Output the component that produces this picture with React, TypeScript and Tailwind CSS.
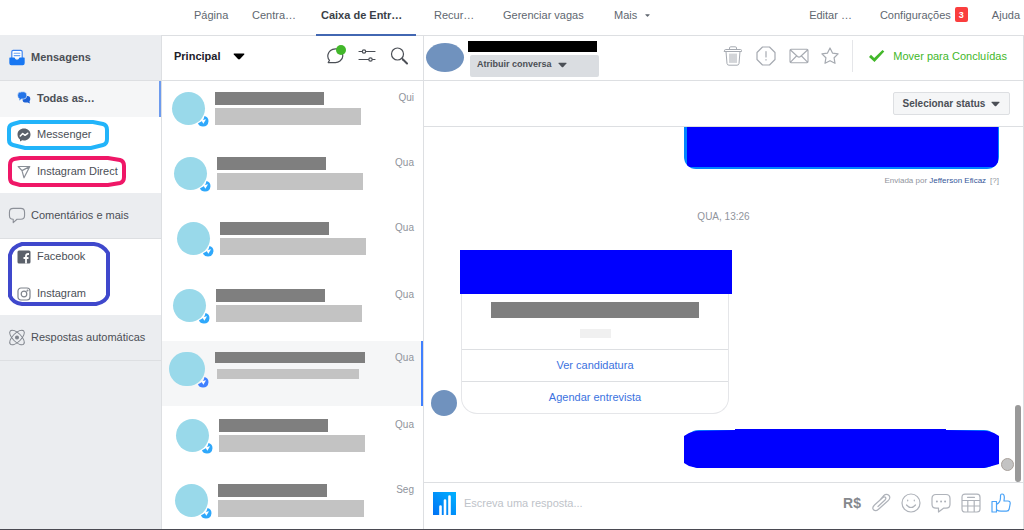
import type { ReactNode } from "react";

const conversations = [
  { day: "Qui", pad: "pl-[10px] pt-[11px]" },
  { day: "Qua", pad: "pl-[12px] pt-[11px]" },
  { day: "Qua", pad: "pl-[15px] pt-[11px]" },
  { day: "Qua", pad: "pl-[11px] pt-[13px]" },
  { day: "Qua", pad: "pl-[7px] pt-[11px]", selected: true },
  { day: "Qua", pad: "pl-[14px] pt-[13px]" },
  { day: "Seg", pad: "pl-[13px] pt-[13px]" },
];

function Icon({
  className,
  box = 20,
  children,
}: {
  className: string;
  box?: number;
  children: ReactNode;
}) {
  return (
    <svg
      viewBox={`0 0 ${box} ${box}`}
      className={`shrink-0 ${className}`}
      fill="none"
      stroke="currentColor"
      strokeWidth="1.2"
      strokeLinecap="round"
      strokeLinejoin="round"
      aria-hidden="true"
    >
      {children}
    </svg>
  );
}

function Caret({ className }: { className: string }) {
  return (
    <svg viewBox="0 0 12 7" className={`shrink-0 ${className}`} fill="currentColor" aria-hidden="true">
      <path d="M1.2.5h9.6q1 0 .4.9L7 6.1q-1 .9-2 0L.8 1.4Q.2.5 1.2.5Z" />
    </svg>
  );
}

function TopNav() {
  return (
    <header className="flex h-9 shrink-0 items-stretch justify-between border-b border-[#dddfe2] text-[11px] text-[#606770]">
      <nav className="flex pl-[194px]">
        <a href="#" className="w-[58px] pt-[7px] leading-4">Página</a>
        <a href="#" className="w-16 pt-[7px] leading-4">Centra…</a>
        <a
          href="#"
          className="-mb-px w-[100px] border-b-2 border-[#4267b2] pt-[7px] pl-[5px] font-bold leading-4 text-[#3a3f47]"
        >
          Caixa de Entr…
        </a>
        <a href="#" className="w-[87px] pt-[7px] pl-[18px] leading-4">Recur…</a>
        <a href="#" className="w-[111px] pt-[7px] leading-4">Gerenciar vagas</a>
        <button className="flex items-start gap-2 pt-[7px] leading-4">
          Mais
          <Caret className="mt-[7px] h-[3px] w-[5px]" />
        </button>
      </nav>
      <nav className="flex items-start gap-6 pt-[7px] pr-1 leading-4">
        <a href="#" className="mr-1">Editar …</a>
        <a href="#" className="flex gap-1">
          Configurações
          <span className="flex h-[15px] w-[13px] items-center justify-center rounded-[2px] bg-[#fa3e3e] text-[9px] font-bold text-white">
            3
          </span>
        </a>
        <a href="#">Ajuda</a>
      </nav>
    </header>
  );
}

function SideSection({ icon, label, bold }: { icon: ReactNode; label: string; bold?: boolean }) {
  return (
    <a
      href="#"
      className={`flex h-[46px] items-center gap-[5px] border-b border-[#dddfe2] bg-[#ebedf0] pl-2 text-[11px] text-[#4b4f56] ${bold ? "font-bold" : ""}`}
    >
      {icon}
      {label}
    </a>
  );
}

function SideItem({ icon, label }: { icon: ReactNode; label: string }) {
  return (
    <a href="#" className="flex h-[37px] items-center gap-1.5 pb-0.5 pl-[17px] text-[11px] text-[#4b4f56]">
      {icon}
      {label}
    </a>
  );
}

function Sidebar() {
  return (
    <aside className="w-[162px] shrink-0 border-r border-[#dddfe2] bg-[#ebedf0]">
      <div className="-mt-px">
        <SideSection
          bold
          label="Mensagens"
          icon={
            <Icon className="h-[17px] w-[18px]" box={18}>
              <path d="M3.500 10V3q0-1.500 1.500-1.500h8Q14.500 1.500 14.500 3v7" fill="#fff" stroke="#3b82f0" />
              <path d="M6 4.500h6M6 7h6" stroke="#6ba4f5" />
              <path d="M1.500 9.500H6q.5 2.500 3 2.500t3-2.500h4.500V15q0 1.500-1.500 1.500H3Q1.500 16.500 1.500 15Z" fill="#1877f2" stroke="#1877f2" />
            </Icon>
          }
        />
      </div>
      <a
        href="#"
        className="flex h-9 items-center gap-1.5 border-r-2 border-[#6d9bee] bg-[#f5f6f7] pb-0.5 pl-[17px] text-[11px] font-bold text-[#4b4f56]"
      >
        <Icon className="h-3.5 w-3.5" box={14}>
          <path d="M7 5h3.500Q13.300 5 13.300 8q0 1.500-.8 2.200l.4 2.300-2.200-1H8Q5.500 11.500 5.500 8Z" fill="#1d62d6" stroke="none" />
          <path d="M3.500.8h3.300Q9.800.8 9.800 4.400T6.800 8H4.600L2 10l.2-2.400Q.6 6.800.6 4.400.6.800 3.500.8Z" fill="#2374e8" stroke="#f5f6f7" strokeWidth=".6" />
        </Icon>
        Todas as…
      </a>
      <div className="relative bg-white pb-0.5">
        <SideItem
          label="Messenger"
          icon={
            <Icon className="h-3.5 w-3.5" box={14}>
              <path d="M7 .5c3.700 0 6.500 2.500 6.500 6s-2.800 6-6.500 6l-1.800-.2L3 13.500v-2C1.400 10.400.5 8.600.5 6.500c0-3.500 2.800-6 6.500-6Z" fill="#5b616b" stroke="none" />
              <path d="m3.300 8 2.400-2.500L8 7.300l2.700-2" stroke="#fff" strokeWidth="1.500" />
            </Icon>
          }
        />
        <SideItem
          label="Instagram Direct"
          icon={
            <Icon className="h-3.5 w-3.5 text-[#8a8f97]" box={14}>
              <path d="M1.200 1.500h11.600L7 12.800 5 5.600ZM5 5.600l7.600-4" />
            </Icon>
          }
        />
        <svg viewBox="0 0 130 76" className="absolute top-0 left-0 h-19 w-[130px]" fill="none" strokeWidth="4" aria-hidden="true">
          <path d="M20 5h73l10 2q4 1 4 6v9q0 5-4 6l-12 3H25l-12-3q-4-1-4-5V12q0-4 4-5Z" stroke="#22b4fa" />
          <path d="M20 41h88l12 2q4 1 4 6v11q0 5-4 6l-12 2H20l-7-2q-3-1-3-5V48q0-5 4-6Z" stroke="#ef1767" />
        </svg>
      </div>
      <SideSection
        label="Comentários e mais"
        icon={
          <Icon className="h-[17px] w-[18px] text-[#8d9199]" box={18}>
            <path d="M5 1.500h8q4 0 4 4V9q0 4-4 4H9l-4 3.500V13Q1 13 1 9V5.500q0-4 4-4Z" />
          </Icon>
        }
      />
      <div className="relative bg-white pb-0.5">
        <SideItem
          label="Facebook"
          icon={
            <Icon className="h-3.5 w-3.5" box={14}>
              <rect x=".5" y=".5" width="13" height="13" rx="1.500" fill="#5b616b" stroke="none" />
              <path d="M9 13.500V6q0-2 2.200-2h.8M6.500 8h5" stroke="#fff" strokeWidth="1.800" strokeLinecap="butt" />
            </Icon>
          }
        />
        <SideItem
          label="Instagram"
          icon={
            <Icon className="h-3.5 w-3.5 text-[#7f848c]" box={14}>
              <rect x="1" y="1" width="12" height="12" rx="3" />
              <circle cx="7" cy="7" r="2.800" />
              <circle cx="10.500" cy="3.500" r=".4" />
            </Icon>
          }
        />
        <svg viewBox="0 0 114 70" className="absolute top-0 left-0 h-[70px] w-[114px]" fill="none" strokeWidth="4" aria-hidden="true">
          <path d="M22 5h72q9 1 14 9v42q-2 7-12 9H22q-9-1-12-8V16q2-8 12-11Z" stroke="#3f48cc" strokeLinejoin="round" />
        </svg>
      </div>
      <SideSection
        label="Respostas automáticas"
        icon={
          <Icon className="h-[17px] w-[18px] text-[#7f848c]" box={18}>
            <ellipse cx="9" cy="9" rx="10" ry="4.500" transform="rotate(45 9 9)" strokeWidth="1" />
            <ellipse cx="9" cy="9" rx="10" ry="4.500" transform="rotate(-45 9 9)" strokeWidth="1" />
            <circle cx="9" cy="9" r="1.500" fill="currentColor" />
          </Icon>
        }
      />
    </aside>
  );
}

function Conversation({ day, pad, selected }: { day: string; pad: string; selected?: boolean }) {
  return (
    <li className={`flex h-[65px] shrink-0 items-start ${pad} ${selected ? "border-r-2 border-[#4080ff] bg-[#f5f6f7] pr-[7px]" : "pr-[9px]"}`}>
      <div className={`relative shrink-0 rounded-full bg-[#99d9ea] ${selected ? "h-[34px] w-9" : "h-[33px] w-[33px]"}`}>
        <svg viewBox="0 0 12 12" className="absolute -right-1 -bottom-0.5 h-3 w-3" aria-hidden="true">
          <path
            d="M7.500 1Q11.500 2 11.500 6.300 11 11.500 6 11.500 2 11.500 1 8.200 6.500 6.500 7.500 1Z"
            fill={selected ? "#4080ff" : "#2fa8fb"}
          />
          <path d="M4.300 5.200 9 4.300 6.400 8.800Z" fill="#fff" />
        </svg>
      </div>
      {selected ? (
        <div className="ml-2.5 space-y-1.5">
          <div className="h-[11px] w-[150px] bg-[#7f7f7f]" />
          <div className="ml-0.5 h-2.5 w-[142px] bg-[#c3c3c3]" />
        </div>
      ) : (
        <div className="ml-2.5 space-y-[3px]">
          <div className="h-[13px] w-[109px] bg-[#7f7f7f]" />
          <div className="h-[17px] w-[146px] bg-[#c3c3c3]" />
        </div>
      )}
      <time className="ml-auto text-[10px] leading-3 text-[#90949c]">{day}</time>
    </li>
  );
}

function ConversationList() {
  return (
    <section className="flex w-[262px] shrink-0 flex-col overflow-hidden border-r border-[#dddfe2]">
      <div className="flex h-[45px] shrink-0 items-center border-b border-[#dddfe2] pr-[15px] pb-1 pl-3">
        <button className="flex items-center gap-[13px] text-[11px] font-bold text-[#1d2129]">
          Principal
          <Caret className="h-[7px] w-3 text-black" />
        </button>
        <div className="ml-auto flex items-center gap-3.5 text-[#4b4f56]">
          <button aria-label="Não lidas" className="relative">
            <Icon className="h-[18px] w-[18px]" box={18}>
              <path d="M9.500 1.800A6.800 6.800 0 0 1 14 14q-2 1.600-4.500 1.600H2.200l1.300-2.300Q1.200 11 2 7.500 3.300 2.200 9.500 1.800Z" />
            </Icon>
            <span className="absolute -top-0.5 -right-0.5 h-2.5 w-2.5 rounded-full bg-[#42b72a]" />
          </button>
          <button aria-label="Filtros">
            <Icon className="h-[18px] w-[18px]" box={18}>
              <path d="M1 4.500h3M8 4.500h9M1 12.500h9.500M14.500 12.500H17" />
              <circle cx="6" cy="4.500" r="1.700" />
              <circle cx="12.500" cy="12.500" r="1.700" />
            </Icon>
          </button>
          <button aria-label="Pesquisar">
            <Icon className="h-[18px] w-[18px]" box={18}>
              <circle cx="7.500" cy="7" r="6" />
              <path d="m12 11.500 1 1" />
              <path d="m13 12.500 4 4" strokeWidth="2" />
            </Icon>
          </button>
        </div>
      </div>
      <ul className="flex min-h-0 flex-1 flex-col overflow-hidden">
        {conversations.map((c, i) => (
          <Conversation key={i} {...c} />
        ))}
      </ul>
    </section>
  );
}

function ChatHeader() {
  return (
    <div className="flex h-[45px] shrink-0 items-start border-b border-[#dddfe2] pr-4 pl-0.5">
      <div className="mt-[7px] h-[29px] w-[38px] shrink-0 rounded-[50%] bg-[#7092be]" />
      <div className="mt-[5px] ml-1">
        <div className="h-[11px] w-[129px] bg-black" />
        <button className="mt-[3px] ml-0.5 flex h-[22px] w-[129px] items-start gap-1.5 rounded-[2px] bg-[#dadde1] pt-[3px] pl-[7px] text-[9px] leading-3 font-bold text-[#4b4f56]">
          Atribuir conversa
          <Caret className="mt-[4px] h-[6px] w-[9px]" />
        </button>
      </div>
      <div className="mt-2.5 ml-auto flex items-center gap-[13px] text-[#a6aab1]">
        <button aria-label="Excluir">
          <Icon className="h-5 w-5">
            <path d="M1.500 4.500q0-1 1-1h15q1 0 1 1v1h-17ZM6.500 3.500V2q0-1.200 1.200-1.200h4.600q1.200 0 1.200 1.200v1.500M3 5.500l1 12q.2 1.700 2 1.700h8q1.800 0 2-1.700l1-12M7 8v8.500M9 8v8.500M11 8v8.500M13 8v8.500" strokeWidth="1" />
          </Icon>
        </button>
        <button aria-label="Spam">
          <Icon className="h-5 w-5">
            <path d="M6.500 1h7L19 6.500v7L13.500 19h-7L1 13.500v-7ZM10 5.500v5.500M10 13.500v.6" />
          </Icon>
        </button>
        <button aria-label="Marcar como não lida">
          <Icon className="h-5 w-5">
            <path d="M1 4.500q0-1.200 1-1.200h16q1 0 1 1.200v11q0 1.200-1 1.200H2q-1 0-1-1.200ZM1.500 4l7 6.500q1.500 1.200 3 0l7-6.500M1.500 16.200l6-6.200M18.500 16.200l-6-6.200" strokeWidth="1.100" />
          </Icon>
        </button>
        <button aria-label="Acompanhar" className="-mx-0.5">
          <Icon className="h-5 w-5">
            <path d="m10 2 2.500 5.100 5.600.8-4 3.900.9 5.500-5-2.600-5 2.600.9-5.500-4-3.900 5.600-.8Z" />
          </Icon>
        </button>
      </div>
      <button className="mt-1 ml-3.5 flex h-8 items-center gap-2 border-l border-[#e5e6e9] pl-[15px] text-[11px] text-[#42b72a]">
        <svg viewBox="0 0 17 14" className="h-3.5 w-[17px]" aria-hidden="true">
          <path d="m1 8 2-2.200L6.200 9 14.500 1l1.800 1.500L6.500 13Z" fill="#42b72a" />
        </svg>
        Mover para Concluídas
      </button>
    </div>
  );
}

function Messages() {
  return (
    <div className="relative min-h-0 flex-1 overflow-hidden">
      <div className="pr-6 pl-[7px]">
        <div className="ml-auto h-[42px] w-[315px] overflow-hidden rounded-b-xl bg-[#0084ff] pr-px pb-0.5 pl-[3px]">
          <div className="h-full bg-[#0000ff]" />
        </div>
        <p className="mt-1.5 text-right text-[8px] leading-3 text-[#90949c]">
          Enviada por <a href="#" className="text-[#365899]">Jefferson Eficaz</a>
          <button className="ml-1">[?]</button>
        </p>
      </div>
      <p className="mt-6 text-center text-[10px] leading-3 text-[#90949c]">QUA, 13:26</p>
      <div className="mt-[27px] flex items-end pl-[7px]">
        <div className="-mb-0.5 h-[26px] w-[26px] rounded-full bg-[#7092be]" />
        <div className="ml-[3px] w-[272px]">
          <div className="h-11 bg-[#0000ff]" />
          <div className="mr-[3px] ml-px rounded-b-2xl border border-t-0 border-[#e5e6e9] text-[11px] text-[#3b72e0]">
            <div className="flex h-[55px] flex-col items-center gap-[11px] pt-2">
              <div className="h-4 w-52 bg-[#7f7f7f]" />
              <div className="h-[9px] w-[31px] bg-[#f0f0f0]" />
            </div>
            <button className="block h-8 w-full border-t border-[#dddfe2]">Ver candidatura</button>
            <button className="block h-8 w-full border-t border-[#dddfe2]">Agendar entrevista</button>
          </div>
        </div>
      </div>
      <div className="mt-[15px] flex items-end justify-end gap-0.5 pr-[9px]">
        <svg viewBox="0 0 315 40" className="h-10 w-[315px]" aria-hidden="true">
          <rect y="1" width="315" height="38" rx="15" fill="#0084ff" />
          <path d="M0 7 5 4 12 2 51 1V0h211v1l41 1 7 2 5 3v28l-7 2-8 2H13l-8-2-5-3Z" fill="#00f" />
        </svg>
        <span className="-mb-0.5 h-[13px] w-[13px] rounded-full border border-[#a9a19b] bg-[#c3c3c3]" />
      </div>
      {/* scroll thumb */}
      <div className="absolute right-0.5 bottom-0 h-[77px] w-1.5 rounded-full bg-[#999]" />
    </div>
  );
}

function Composer() {
  return (
    <form className="flex h-[47px] shrink-0 items-center border-t border-[#dddfe2] pr-3 pb-1.5 pl-[9px]">
      <svg viewBox="0 0 23 23" className="h-[23px] w-[23px] shrink-0" aria-hidden="true">
        <defs>
          <linearGradient id="brand" x1="0" y1="1" x2="1" y2="0">
            <stop offset="0" stopColor="#0072f5" />
            <stop offset="1" stopColor="#00b2ff" />
          </linearGradient>
        </defs>
        <rect width="23" height="23" fill="url(#brand)" />
        <path d="M7.500 23v-8.500M12 23V8.500M16.500 23V4.500" stroke="#fff" strokeWidth="2.600" strokeLinecap="round" />
      </svg>
      <input
        type="text"
        aria-label="Escreva uma resposta"
        placeholder="Escreva uma resposta..."
        className="ml-2 min-w-0 flex-1 bg-transparent text-[11px] outline-none placeholder:text-[#bec3c9]"
      />
      <div className="flex items-center gap-2.5 text-[#afb3ba]">
        <button type="button" aria-label="Pagamento" className="text-[14px] font-bold text-[#85888d]">
          R$
        </button>
        <button type="button" aria-label="Anexar">
          <Icon className="h-5 w-5">
            <path d="m7 13.500 7-6.500q1.500-1.700.4-2.700-1.200-1-2.800.4L3.500 12q-2.800 2.800-1 4.800 2.200 2 5-.5l9.500-8.500q3-3 1-5.300-2.500-2.200-5.500.3L9 7" />
          </Icon>
        </button>
        <button type="button" aria-label="Emoji">
          <Icon className="h-5 w-5">
            <circle cx="10" cy="10" r="9" />
            <path d="M5.500 12q4.500 5 9 0M6.700 7v.8M13.300 7v.8" />
          </Icon>
        </button>
        <button type="button" aria-label="Respostas salvas">
          <Icon className="h-5 w-5">
            <path d="M5 1.500h10q4 0 4 4v5.700q0 4-4 4h-2.500L7.500 19v-3.800H5q-4 0-4-4V5.500q0-4 4-4Z" />
            <path d="M5.800 8.500h.2M10 8.500h.2M14 8.500h.2" strokeWidth="1.800" />
          </Icon>
        </button>
        <button type="button" aria-label="Agendar">
          <Icon className="h-5 w-5">
            <path d="M4 1.200h12q3 0 3 3V16q0 3-3 3H4q-3 0-3-3V4.200q0-3 3-3ZM6.500 4.300h7M1 7.500h18M1 13h18M6.800 7.500V19M13.200 7.500V19" />
          </Icon>
        </button>
        <button type="button" aria-label="Curtir" className="text-[#4aa3f7]">
          <Icon className="h-5 w-5">
            <path d="M1 8.500h4.500V19H1ZM5.500 11.500q4-2 4-7V3q0-2 1.500-2 2.500 0 2.300 4L13 8h4q2.300 0 2.200 2.500l-1 5.500q-.5 2.200-2.700 2.200H10q-2.500 0-4.500-1.500" />
          </Icon>
        </button>
      </div>
    </form>
  );
}

export default function App() {
  return (
    <div className="flex h-screen flex-col overflow-hidden border-b border-[#4a4a52] bg-white font-['Liberation_Sans',Arial,sans-serif]">
      <TopNav />
      <main className="flex min-h-0 flex-1">
        <Sidebar />
        <ConversationList />
        <section className="flex min-w-0 flex-1 flex-col border-r border-[#dddfe2]">
          <ChatHeader />
          <div className="flex h-[46px] shrink-0 items-center justify-end border-b border-[#dddfe2] pr-[13px]">
            <button className="flex h-[23px] w-[117px] items-center justify-center gap-1.5 rounded-[2px] border border-[#dddfe2] bg-[#f5f6f7] text-[10px] font-bold text-[#4b4f56]">
              Selecionar status
              <Caret className="h-[6px] w-[9px]" />
            </button>
          </div>
          <Messages />
          <Composer />
        </section>
      </main>
    </div>
  );
}
